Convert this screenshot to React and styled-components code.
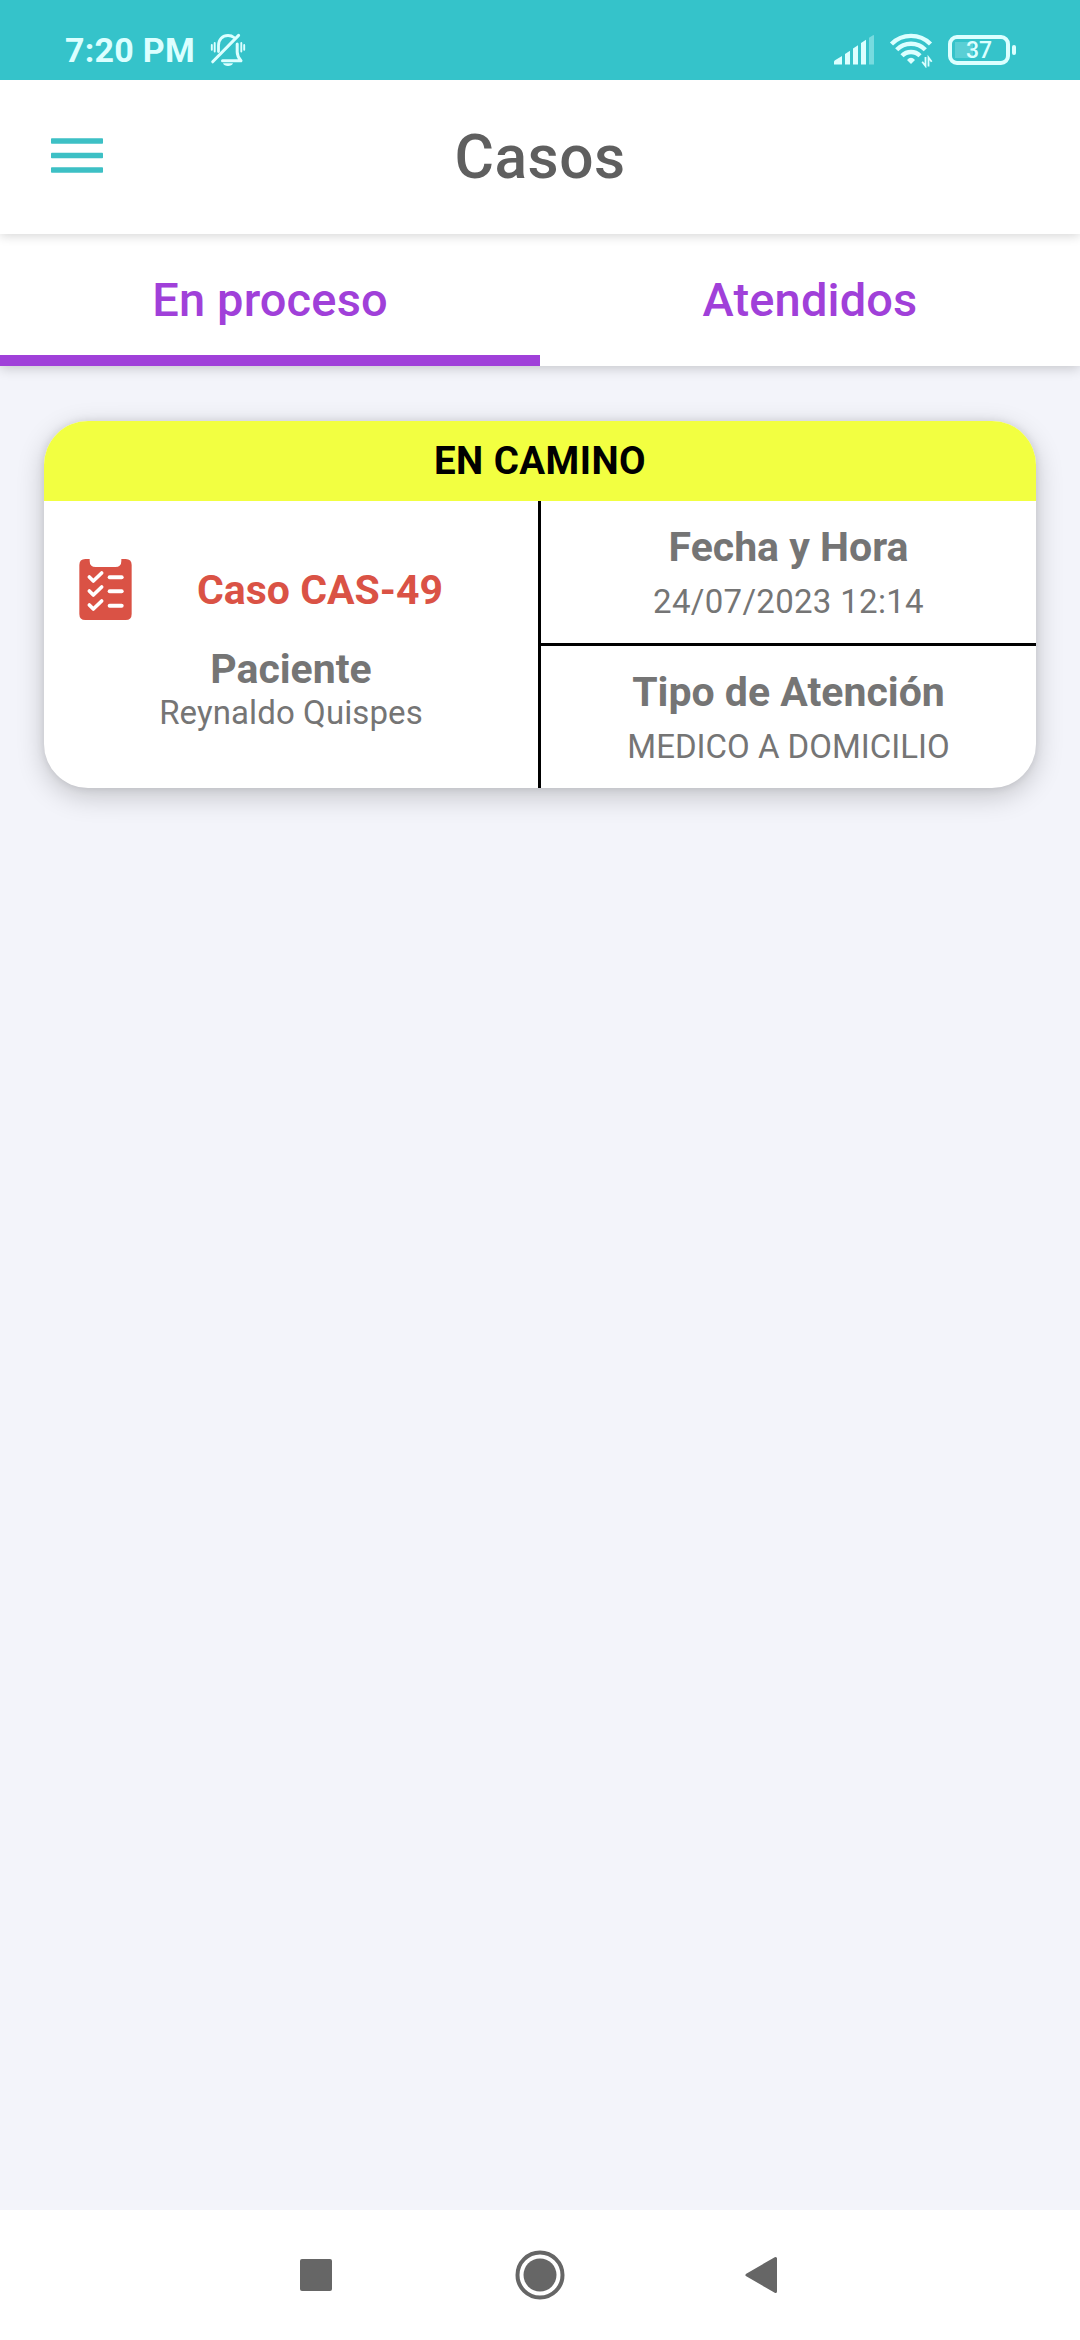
import React from 'react'
import styled, { createGlobalStyle } from 'styled-components'

const GlobalStyle = createGlobalStyle`
  * {
    box-sizing: border-box;
  }
  body {
    margin: 0;
    background: #f3f4fa;
    font-family: Roboto, "Liberation Sans", sans-serif;
  }
`

const BellOffIcon = () => (
  <svg width="40" height="40" viewBox="0 0 40 40" fill="none" stroke="#dcffff" strokeLinecap="round">
    <path strokeWidth="2.800" d="M10.500 21.500V15.500C10.500 9.500 14.500 5.500 20 5.500C22.500 5.500 24.600 6.300 26 7.500" />
    <path strokeWidth="3" strokeLinejoin="round" d="M29.200 14V22C29.200 26 31 28.500 33 30.800H14.500" />
    <path strokeWidth="3" d="M4.700 31.800L30.600 5.400" />
    <path strokeWidth="1.900" d="M3.800 15V19.800M6.700 13V21.500M33.300 13V21.500M36.200 15V19.800" />
    <path fill="#dcffff" stroke="none" d="M15 33.200H25C24.300 35 22.500 36 20 36S15.700 35 15 33.200Z" />
  </svg>
)

const SignalIcon = () => (
  <svg width="40" height="30" viewBox="0 0 40 30" fill="#dcffff">
    <path d="M0 29.500V27Q0 26 1 25.300L8 21V29.500Z" />
    <path d="M11 29.500V19L16 15.800V29.500Z" />
    <path d="M19 29.500V13.400L24 10.200V29.500Z" />
    <path d="M27 29.500V8L32 4.800V29.500Z" />
    <path opacity="0.4" d="M35 29.500V2.800L39 0.300Q40 -0.300 40 1V29.500Z" />
  </svg>
)

const WifiIcon = () => (
  <svg width="44" height="36" viewBox="0 0 44 36" fill="none" stroke="#dcffff" strokeWidth="4.400">
    <path d="M2.500 12A27.500 27.500 0 0 1 41.500 12" />
    <path d="M7.700 17.800A20 20 0 0 1 36.300 17.800" />
    <path d="M13 23.800A12.500 12.500 0 0 1 31 23.800" />
    <path fill="#dcffff" stroke="none" d="M18 28Q22 23.500 26 28L22 32Z" />
    <path strokeWidth="1.800" d="M36.500 25V34L33.200 29.800M39.500 34.500V25.500L42.700 29.700" />
  </svg>
)

const MenuIcon = () => (
  <svg width="52" height="36" viewBox="0 0 52 36" fill="#3dc0c5">
    <rect y="0.200" width="52" height="5.600" rx="0.800" />
    <rect y="14.700" width="52" height="5.600" rx="0.800" />
    <rect y="29.200" width="52" height="5.600" rx="0.800" />
  </svg>
)

const ClipboardIcon = () => (
  <svg width="53" height="61" viewBox="0 0 157 183" fill="none" strokeLinecap="round" strokeLinejoin="round">
    <path
      fill="#da5245"
      d="M18 0H31V6Q31 24 49 24H108Q126 24 126 6V0H139Q157 0 157 18V165Q157 183 139 183H18Q0 183 0 165V18Q0 0 18 0Z"
    />
    <g stroke="#fff" strokeWidth="11">
      {[0, 42, 84].map((y) => (
        <path key={y} d={`M30 ${54 + y}L42 ${66 + y}L67 ${42 + y}`} />
      ))}
    </g>
    <g stroke="#fff" strokeWidth="12">
      {[55, 97, 140].map((y) => (
        <path key={y} d={`M91 ${y}H127`} />
      ))}
    </g>
  </svg>
)

const App = () => {
  return (
    <Screen>
      <GlobalStyle />
      <StatusBar>
        <StatusGroup>
          <Clock>7:20 PM</Clock>
          <BellOffIcon />
        </StatusGroup>
        <StatusGroup $gap="15px">
          <SignalIcon />
          <WifiIcon />
          <Battery>
            <BatteryBody>37</BatteryBody>
            <BatteryTip />
          </Battery>
        </StatusGroup>
      </StatusBar>

      <Header>
        <MenuButton aria-label="Menu">
          <MenuIcon />
        </MenuButton>
        <Title>Casos</Title>
      </Header>

      <Tabs>
        <Tab $active>En proceso</Tab>
        <Tab>Atendidos</Tab>
      </Tabs>

      <Content>
        <Card>
          <CardStatus>EN CAMINO</CardStatus>
          <CardBody>
            <CasePanel>
              <CaseRow>
                <CaseIcon>
                  <ClipboardIcon />
                </CaseIcon>
                <CaseName>Caso CAS-49</CaseName>
              </CaseRow>
              <Label>Paciente</Label>
              <Value>Reynaldo Quispes</Value>
            </CasePanel>
            <InfoPanel>
              <InfoCell>
                <Label>Fecha y Hora</Label>
                <Value $spacing="0.3px">24/07/2023 12:14</Value>
              </InfoCell>
              <InfoCell>
                <Label>Tipo de Atención</Label>
                <Value $spacing="0">MEDICO A DOMICILIO</Value>
              </InfoCell>
            </InfoPanel>
          </CardBody>
        </Card>
      </Content>

      <NavBar>
        <svg width="32" height="32" viewBox="0 0 32 32">
          <rect width="32" height="32" rx="2" fill="#666" />
        </svg>
        <svg width="50" height="50" viewBox="0 0 50 50">
          <circle cx="25" cy="25" r="22.500" fill="none" stroke="#666" strokeWidth="4" />
          <circle cx="25" cy="25" r="16.500" fill="#666" />
        </svg>
        <svg width="32" height="38" viewBox="0 0 32 38">
          <path
            d="M30.500 2.500V35.500L2 19Z"
            fill="#666"
            stroke="#666"
            strokeWidth="3"
            strokeLinejoin="round"
          />
        </svg>
      </NavBar>
    </Screen>
  )
}

const Screen = styled.main`
  display: flex;
  flex-direction: column;
  width: 1080px;
  height: 2340px;
  overflow: hidden;
  background: #f3f4fa;
`

const StatusBar = styled.div`
  display: flex;
  justify-content: space-between;
  height: 80px;
  padding: 19px 64px 0 65px;
  background: #35c3ca;
  z-index: 3;
`

const StatusGroup = styled.div`
  display: flex;
  align-items: center;
  gap: ${(props) => props.$gap || '13px'};
  height: 61px;
`

const Clock = styled.span`
  color: #dcffff;
  font-size: 34px;
  font-weight: 700;
  line-height: 40px;
  letter-spacing: 0.25px;
`

const Battery = styled.div`
  display: flex;
  align-items: center;
  gap: 2px;
`

const BatteryBody = styled.div`
  width: 62px;
  height: 30px;
  border: 4px solid #dcffff;
  border-radius: 9px;
  background: linear-gradient(#5acfd5, #5acfd5) 3px 3px / 18px 16px no-repeat;
  color: #dcffff;
  font-size: 23px;
  font-weight: 500;
  line-height: 24px;
  text-align: center;
`

const BatteryTip = styled.div`
  width: 4px;
  height: 10px;
  border-radius: 2px;
  background: #dcffff;
`

const Header = styled.header`
  display: grid;
  grid-template-columns: 103px 1fr 103px;
  align-items: center;
  height: 154px;
  background: #fff;
  box-shadow: 0 2px 10px rgba(0, 0, 0, 0.16);
  z-index: 2;
`

const MenuButton = styled.button`
  display: flex;
  justify-content: flex-end;
  padding: 0 0 3px;
  border: 0;
  background: none;
`

const Title = styled.h1`
  margin: 0;
  padding-top: 2px;
  color: #5f5f5f;
  font-size: 60.5px;
  font-weight: 500;
  line-height: 70px;
  letter-spacing: 0.5px;
  text-align: center;
`

const Tabs = styled.nav`
  display: flex;
  height: 132px;
  background: #fff;
  box-shadow: 0 2px 12px rgba(0, 0, 0, 0.2);
  z-index: 1;
`

const Tab = styled.button`
  flex: 1;
  padding: 9px 0 0;
  border: 0;
  border-bottom: 11px solid ${(props) => (props.$active ? '#a040d9' : 'transparent')};
  background: none;
  color: #a040d9;
  font-family: inherit;
  font-size: 47px;
  font-weight: 500;
  letter-spacing: 0.15px;
`

const Content = styled.section`
  flex: 1;
  padding: 55px 44px;
`

const Card = styled.article`
  height: 367px;
  border-radius: 44px;
  background: #fff;
  overflow: hidden;
  box-shadow: 0 8px 28px rgba(0, 0, 0, 0.2), 0 0 8px rgba(0, 0, 0, 0.1);
`

const CardStatus = styled.div`
  height: 80px;
  background: #f2ff41;
  color: #000;
  font-size: 38.5px;
  font-weight: 700;
  line-height: 80px;
  letter-spacing: 0.45px;
  text-align: center;
`

const CardBody = styled.div`
  display: flex;
  height: 287px;
`

const CasePanel = styled.div`
  display: flex;
  flex-direction: column;
  justify-content: center;
  width: 497px;
  border-right: 3px solid #000;
`

const CaseRow = styled.div`
  display: flex;
  align-items: center;
  height: 66px;
  margin-bottom: 22px;
  padding-left: 35px;
`

const CaseIcon = styled.div`
  display: flex;
  padding-bottom: 2px;
`

const CaseName = styled.h2`
  flex: 1;
  margin: 0 30px 0 0;
  color: #da5245;
  font-size: 41px;
  font-weight: 700;
  line-height: 47px;
  text-align: center;
`

const InfoPanel = styled.div`
  display: flex;
  flex-direction: column;
  flex: 1;
`

const InfoCell = styled.div`
  display: flex;
  flex-direction: column;
  justify-content: center;
  gap: 11px;
  flex: 1;

  & + & {
    border-top: 3px solid #000;
  }
`

const Label = styled.div`
  color: #757575;
  font-size: 41px;
  font-weight: 700;
  line-height: 47px;
  text-align: center;
`

const Value = styled.div`
  color: #757575;
  font-size: 33px;
  line-height: 39px;
  letter-spacing: ${(props) => props.$spacing || '0.1px'};
  text-align: center;
`

const NavBar = styled.footer`
  display: grid;
  grid-template-columns: 215px 230px 32px;
  align-items: center;
  height: 130px;
  padding-left: 300px;
  background: #fff;
`

export default App
